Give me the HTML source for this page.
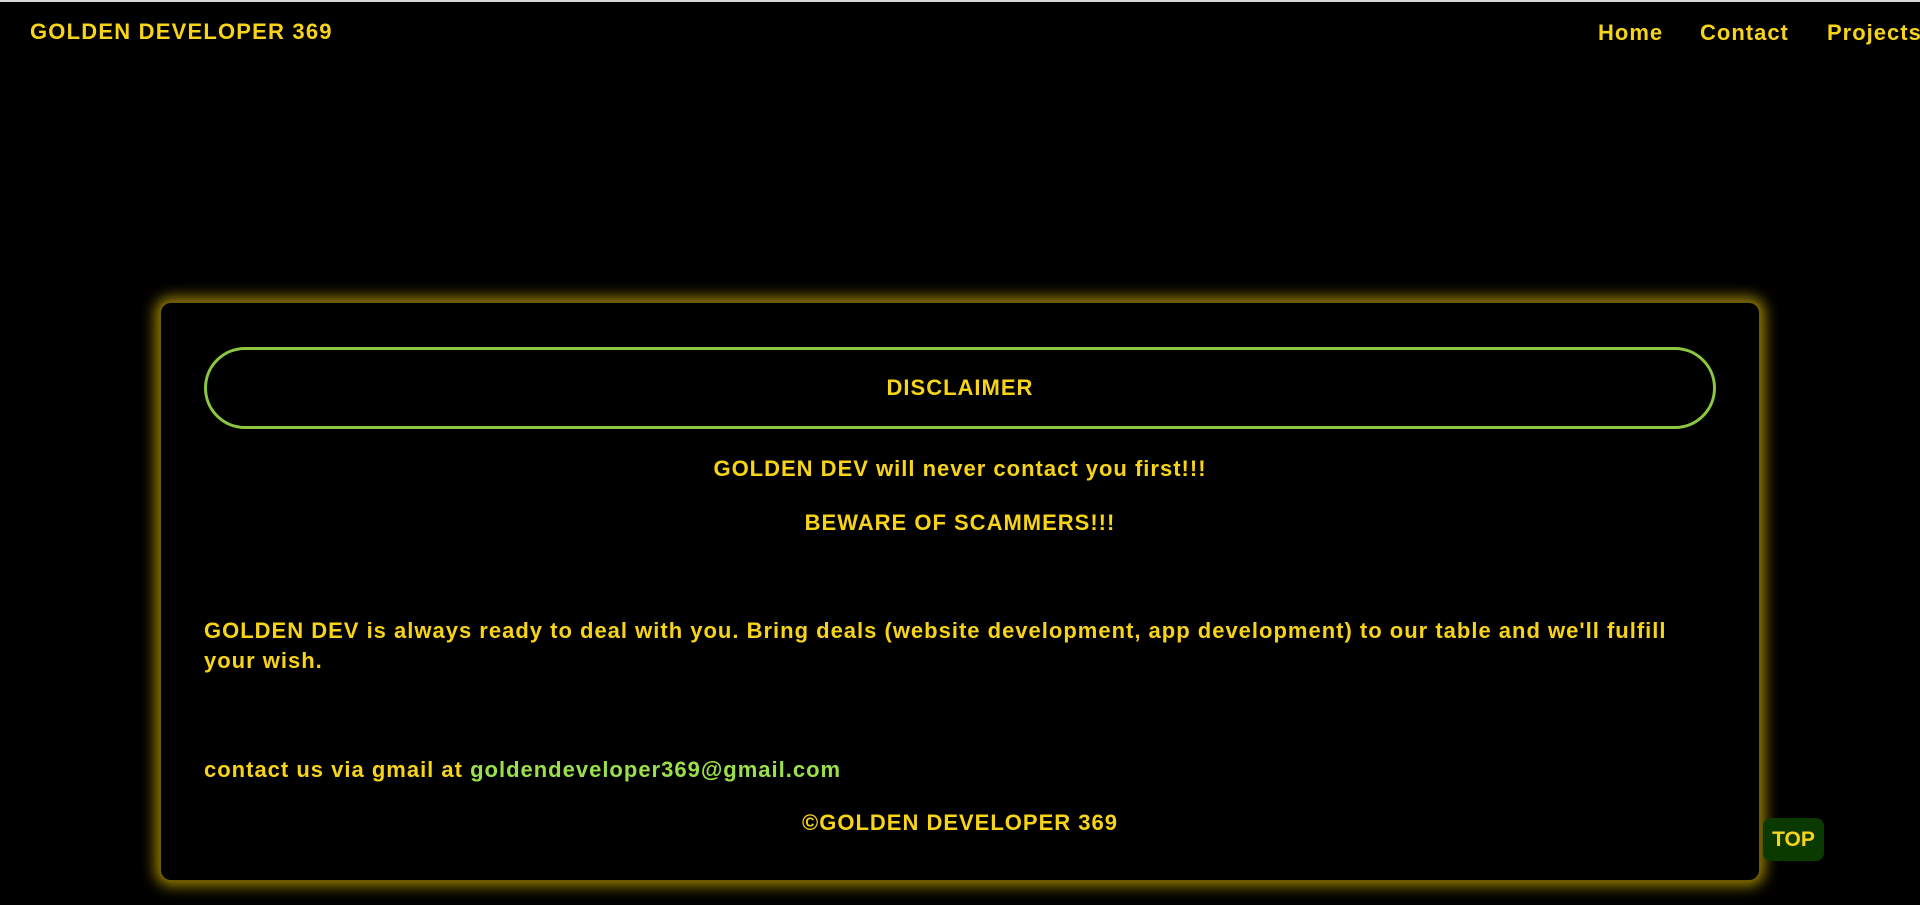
<!DOCTYPE html>
<html><head><meta charset="utf-8"><style>
html,body{margin:0;padding:0;background:#000;width:1920px;height:905px;overflow:hidden;font-family:"Liberation Sans",Arial,sans-serif;font-weight:bold;color:#f7d417;letter-spacing:1px;}
.topline{position:absolute;left:0;top:0;width:1920px;height:2px;background:#d8d8d8;}
.logo{position:absolute;left:30px;top:19px;font-size:22px;letter-spacing:1.2px;}
.nav{position:absolute;top:20px;font-size:22px;white-space:nowrap;}
.card{position:absolute;left:159px;top:301px;width:1598px;height:577px;border:2px solid #6b5a00;border-radius:12px;box-shadow:0 0 14px 4px rgba(200,170,0,0.75);background:#000;}
.pill{position:absolute;left:204px;top:347px;width:1506px;height:76px;border:3px solid #8dc63f;border-radius:42px;text-align:center;line-height:76px;font-size:22px;}
.c{position:absolute;left:159px;width:1602px;text-align:center;font-size:22px;}
.p{position:absolute;left:204px;width:1490px;font-size:22px;line-height:30px;}
.top{position:absolute;left:1763px;top:818px;width:61px;height:43px;background:#0b3a00;border-radius:8px;text-align:center;line-height:43px;font-size:21px;letter-spacing:0;}
</style></head><body>
<div class="topline"></div>
<div class="logo">GOLDEN DEVELOPER 369</div>
<div class="nav" style="left:1598px">Home</div>
<div class="nav" style="left:1700px">Contact</div>
<div class="nav" style="left:1827px">Projects</div>
<div class="card"></div>
<div class="pill">DISCLAIMER</div>
<div class="c" style="top:456px">GOLDEN DEV will never contact you first!!!</div>
<div class="c" style="top:510px">BEWARE OF SCAMMERS!!!</div>
<div class="p" style="top:616px">GOLDEN DEV is always ready to deal with you. Bring deals (website development, app development) to our table and we'll fulfill your wish.</div>
<div class="p" style="top:755px">contact us via gmail at <span style="color:#9be04a">goldendeveloper369@gmail.com</span></div>
<div class="c" style="top:810px">©GOLDEN DEVELOPER 369</div>
<div class="top">TOP</div>
</body></html>
